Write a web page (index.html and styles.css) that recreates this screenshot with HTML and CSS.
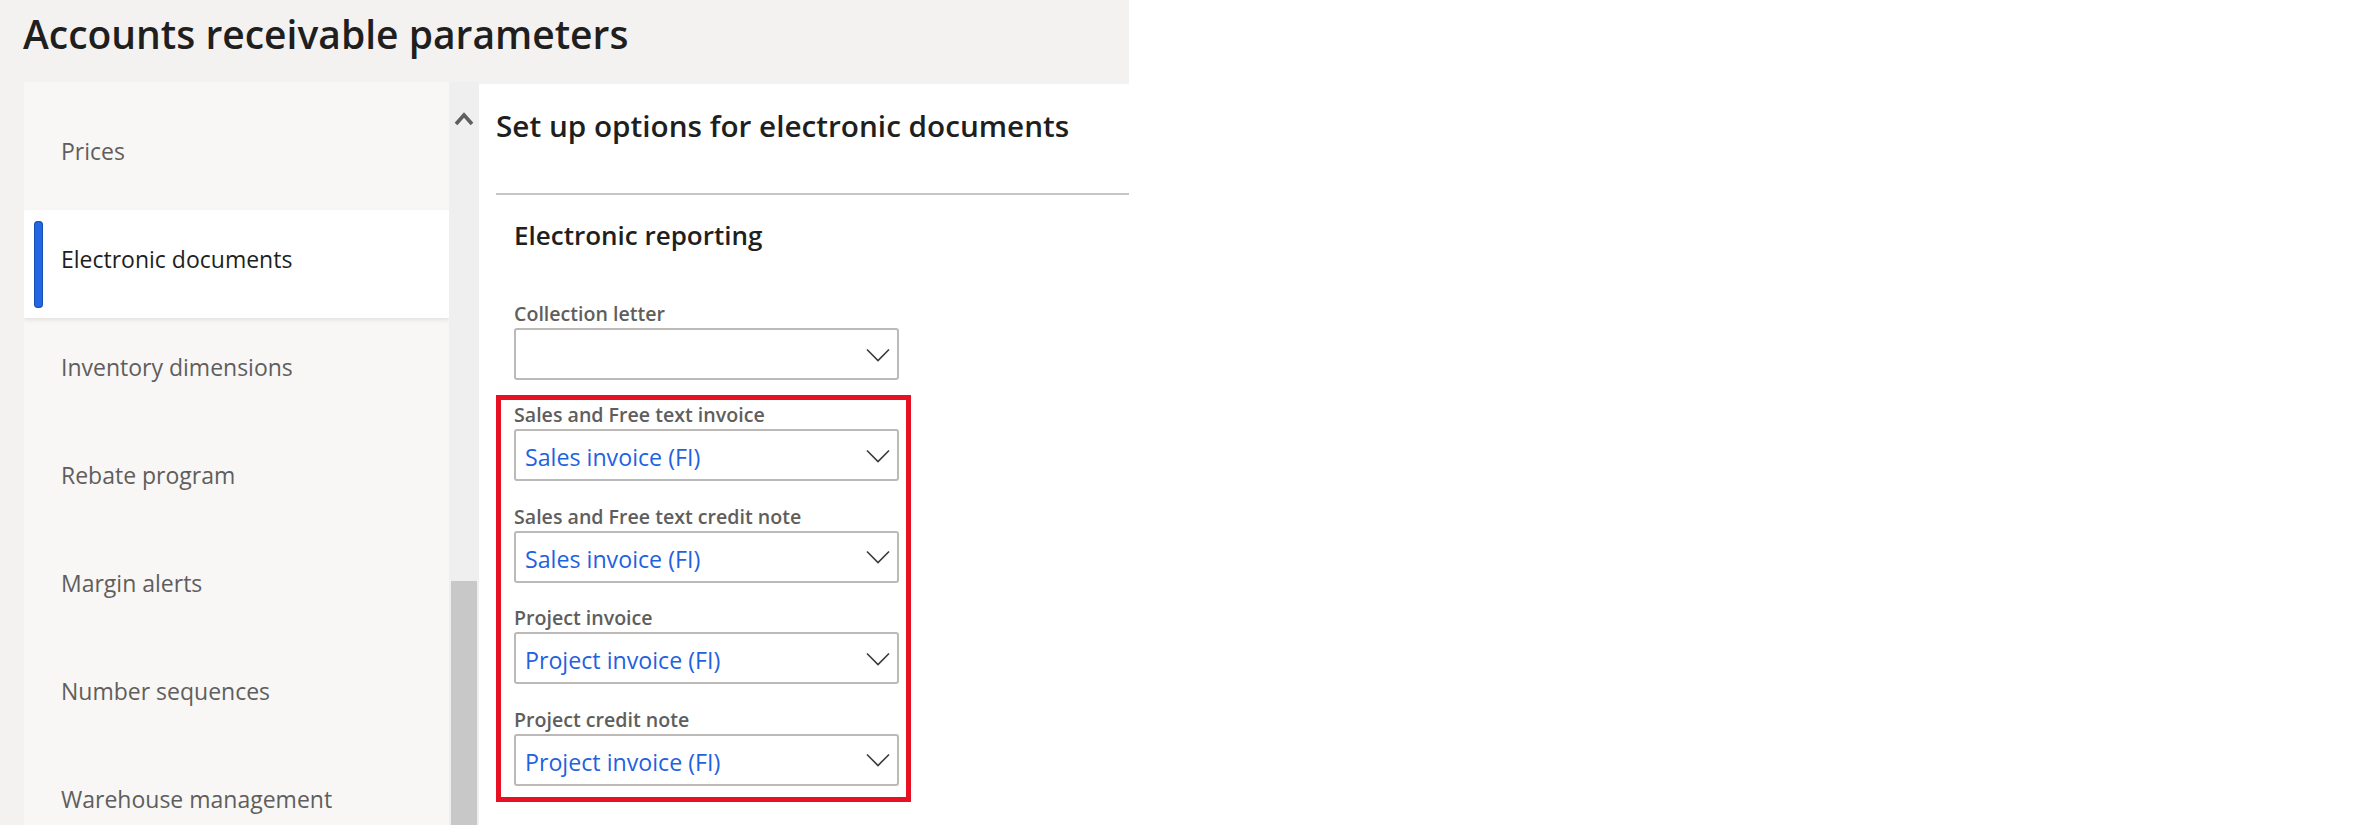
FILE: index.html
```html
<!DOCTYPE html>
<html lang="en">
<head>
<meta charset="utf-8">
<title>Accounts receivable parameters</title>
<link rel="stylesheet" href="styles.css">
</head>
<body>
<div class="app">
  <header class="page-header">
    <h1 class="page-title">Accounts receivable parameters</h1>
  </header>
  <div class="layout">
    <nav class="nav">
      <div class="nav-item">Prices</div>
      <div class="nav-item active">Electronic documents</div>
      <div class="nav-item">Inventory dimensions</div>
      <div class="nav-item">Rebate program</div>
      <div class="nav-item">Margin alerts</div>
      <div class="nav-item">Number sequences</div>
      <div class="nav-item">Warehouse management</div>
    </nav>
    <div class="scroll">
      <svg class="scroll-up" width="20" height="16" viewBox="0 0 20 16" aria-hidden="true">
        <polyline points="2,14 10,5 18,14" fill="none" stroke="#605e5c" stroke-width="3.6" stroke-linejoin="miter"/>
      </svg>
      <div class="scroll-thumb"></div>
    </div>
    <main class="content">
      <h2 class="content-title">Set up options for electronic documents</h2>
      <section class="section">
        <h3 class="section-title">Electronic reporting</h3>
        <div class="field">
          <div class="field-label">Collection letter</div>
          <div class="dropdown">
            <span class="dropdown-value"></span>
            <svg class="chev" width="24" height="14" viewBox="0 0 24 14" aria-hidden="true"><polyline points="1,1.5 12,12.5 23,1.5" fill="none" stroke="#3b3a39" stroke-width="1.6"/></svg>
          </div>
        </div>
        <div class="highlight">
          <div class="field">
            <div class="field-label">Sales and Free text invoice</div>
            <div class="dropdown">
              <span class="dropdown-value">Sales invoice (FI)</span>
              <svg class="chev" width="24" height="14" viewBox="0 0 24 14" aria-hidden="true"><polyline points="1,1.5 12,12.5 23,1.5" fill="none" stroke="#3b3a39" stroke-width="1.6"/></svg>
            </div>
          </div>
          <div class="field">
            <div class="field-label">Sales and Free text credit note</div>
            <div class="dropdown">
              <span class="dropdown-value">Sales invoice (FI)</span>
              <svg class="chev" width="24" height="14" viewBox="0 0 24 14" aria-hidden="true"><polyline points="1,1.5 12,12.5 23,1.5" fill="none" stroke="#3b3a39" stroke-width="1.6"/></svg>
            </div>
          </div>
          <div class="field">
            <div class="field-label">Project invoice</div>
            <div class="dropdown">
              <span class="dropdown-value">Project invoice (FI)</span>
              <svg class="chev" width="24" height="14" viewBox="0 0 24 14" aria-hidden="true"><polyline points="1,1.5 12,12.5 23,1.5" fill="none" stroke="#3b3a39" stroke-width="1.6"/></svg>
            </div>
          </div>
          <div class="field">
            <div class="field-label">Project credit note</div>
            <div class="dropdown">
              <span class="dropdown-value">Project invoice (FI)</span>
              <svg class="chev" width="24" height="14" viewBox="0 0 24 14" aria-hidden="true"><polyline points="1,1.5 12,12.5 23,1.5" fill="none" stroke="#3b3a39" stroke-width="1.6"/></svg>
            </div>
          </div>
        </div>
      </section>
    </main>
  </div>
</div>
</body>
</html>
```

FILE: styles.css
```css
* {
  box-sizing: border-box;
}

html, body {
  margin: 0;
  padding: 0;
  background: #ffffff;
}

body {
  font-family: "Open Sans", "Noto Sans", "Liberation Sans", sans-serif;
  color: #201f1e;
}

.app {
  width: 1129px;
  height: 825px;
  background: #f3f2f1;
  display: flex;
  flex-direction: column;
  overflow: hidden;
}

.page-header {
  height: 82px;
  flex: none;
  padding: 7px 0 0 23px;
}

.page-title {
  margin: 0;
  font-size: 39px;
  line-height: 54px;
  font-weight: 600;
  color: #201f1e;
  white-space: nowrap;
}

.layout {
  flex: 1;
  min-height: 0;
  display: flex;
  padding-left: 24px;
}

.nav {
  width: 425px;
  flex: none;
  background: #f8f7f6;
  padding-top: 20px;
  overflow: hidden;
}

.nav-item {
  position: relative;
  height: 108px;
  display: flex;
  align-items: center;
  padding: 0 0 11px 37px;
  font-size: 23px;
  color: #605e5c;
  white-space: nowrap;
}

.nav-item.active {
  background: #ffffff;
  color: #201f1e;
  box-shadow: 0 2px 4px rgba(0, 0, 0, 0.09);
  z-index: 1;
}

.nav-item.active::before {
  content: "";
  position: absolute;
  left: 10px;
  top: 11px;
  width: 9px;
  height: 87px;
  border-radius: 4px;
  background: #2266e3;
  box-shadow: inset 0 0 0 1px rgba(0, 30, 90, 0.35);
}

.scroll {
  width: 30px;
  flex: none;
  background: #efefef;
  display: flex;
  flex-direction: column;
  align-items: center;
  justify-content: space-between;
}

.scroll-up {
  display: block;
  margin-top: 28px;
}

.scroll-thumb {
  width: 26px;
  height: 244px;
  background: #c8c8c8;
}

.content {
  flex: 1;
  background: #ffffff;
  margin-top: 2px;
  padding: 23px 0 0 17px;
  min-width: 0;
}

.content-title {
  margin: 0 0 48px;
  font-size: 29.7px;
  line-height: 38px;
  font-weight: 600;
  color: #201f1e;
  white-space: nowrap;
}

.section {
  border-top: 2px solid #c8c6c4;
  padding: 23px 0 0 18px;
}

.section-title {
  margin: 0 0 47px;
  font-size: 26px;
  line-height: 34px;
  font-weight: 600;
  color: #201f1e;
}

.field {
  width: 385px;
}

.field-label {
  font-size: 19.6px;
  line-height: 29px;
  font-weight: 600;
  color: #605e5c;
  white-space: nowrap;
}

.dropdown {
  height: 52px;
  border: 2px solid #bcb9b6;
  border-radius: 3px;
  background: #ffffff;
  display: flex;
  align-items: center;
  padding: 4px 7px 0 9px;
}

.dropdown-value {
  flex: 1;
  font-size: 23.2px;
  color: #1f62e0;
  white-space: nowrap;
}

.chev {
  display: block;
  flex: none;
  margin-top: -3px;
}

.highlight {
  width: 415px;
  margin: 15px 0 0 -18px;
  border: 5px solid #e81123;
  padding: 0 7px 11.5px 13px;
}

.highlight .field + .field {
  margin-top: 20.5px;
}
```
